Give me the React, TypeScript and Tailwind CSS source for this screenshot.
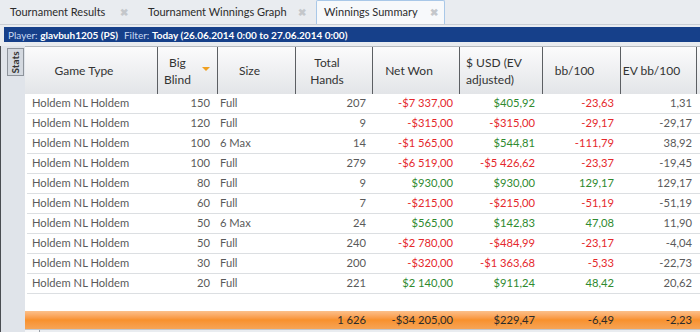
import React from 'react'

type Row = {
  game: string
  bb: number
  size: string
  hands: string
  net: string
  usd: string
  bb100: string
  ev: string
}

const rows: Row[] = [
  { game: 'Holdem NL Holdem', bb: 150, size: 'Full', hands: '207', net: '-$7 337,00', usd: '$405,92', bb100: '-23,63', ev: '1,31' },
  { game: 'Holdem NL Holdem', bb: 120, size: 'Full', hands: '9', net: '-$315,00', usd: '-$315,00', bb100: '-29,17', ev: '-29,17' },
  { game: 'Holdem NL Holdem', bb: 100, size: '6 Max', hands: '14', net: '-$1 565,00', usd: '$544,81', bb100: '-111,79', ev: '38,92' },
  { game: 'Holdem NL Holdem', bb: 100, size: 'Full', hands: '279', net: '-$6 519,00', usd: '-$5 426,62', bb100: '-23,37', ev: '-19,45' },
  { game: 'Holdem NL Holdem', bb: 80, size: 'Full', hands: '9', net: '$930,00', usd: '$930,00', bb100: '129,17', ev: '129,17' },
  { game: 'Holdem NL Holdem', bb: 60, size: 'Full', hands: '7', net: '-$215,00', usd: '-$215,00', bb100: '-51,19', ev: '-51,19' },
  { game: 'Holdem NL Holdem', bb: 50, size: '6 Max', hands: '24', net: '$565,00', usd: '$142,83', bb100: '47,08', ev: '11,90' },
  { game: 'Holdem NL Holdem', bb: 50, size: 'Full', hands: '240', net: '-$2 780,00', usd: '-$484,99', bb100: '-23,17', ev: '-4,04' },
  { game: 'Holdem NL Holdem', bb: 30, size: 'Full', hands: '200', net: '-$320,00', usd: '-$1 363,68', bb100: '-5,33', ev: '-22,73' },
  { game: 'Holdem NL Holdem', bb: 20, size: 'Full', hands: '221', net: '$2 140,00', usd: '$911,24', bb100: '48,42', ev: '20,62' },
]

// column widths, left to right
const cols = ['w-[133px]', 'w-[60px]', 'w-[78px]', 'w-[77px]', 'w-[87px]', 'w-[83px]', 'w-[78px]', 'w-[76px]']

function money(v: string) {
  return v.startsWith('-') ? 'text-[#e5282c]' : 'text-[#2f8a2f]'
}

function Tab({ label, width, active }: { label: string; width: string; active?: boolean }) {
  return (
    <div
      className={
        active
          ? `${width} flex h-[24px] items-center justify-between rounded-t-[2px] border border-b-0 border-[#a9c8e8] bg-[#f7f9fb] pl-[7px] pr-[6px]`
          : `${width} flex h-[24px] items-center justify-between pl-[10px] pr-[10px]`
      }
    >
      <span className="text-[11px] text-[#2b2b2b]">{label}</span>
      <span className="text-[10px] font-bold text-[#c4c7cb]">✖</span>
    </div>
  )
}

function HeaderCell({ i, children, sort }: { i: number; children: React.ReactNode; sort?: boolean }) {
  return (
    <div className={`${cols[i]} relative flex h-full shrink-0 items-center justify-center border-r border-[#5c5f63] pr-[14px] text-center leading-[17px]`}>
      {children}
      {sort && <span className="absolute right-[7px] top-[20px] h-0 w-0 border-x-[4px] border-t-[4px] border-x-transparent border-t-[#f0a020]" />}
    </div>
  )
}

export default function App() {
  return (
    <div className="h-[332px] w-[700px] overflow-hidden bg-[#e9ecf0] font-['Lato',sans-serif]">
      {/* tabs */}
      <div className="flex h-[25px] items-end border-b border-[#c9ced4] bg-[#e9ecf0]">
        <Tab label="Tournament Results" width="w-[138px]" />
        <Tab label="Tournament Winnings Graph" width="w-[178px]" />
        <Tab label="Winnings Summary" width="w-[129px]" active />
      </div>

      {/* filter bar */}
      <div className="ml-[4px] mt-[2px] flex h-[15px] items-center gap-[6px] bg-[#16408a] pl-[4px] text-[10px] leading-none">
        <span className="text-[#c9daf4]">
          Player: <span className="font-bold text-white">glavbuh1205 (PS)</span>
        </span>
        <span className="text-[#c9daf4]">
          Filter: <span className="font-bold text-white">Today (26.06.2014 0:00 to 27.06.2014 0:00)</span>
        </span>
      </div>

      <div className="mt-[4px] flex">
        {/* side strip */}
        <div className="flex h-[290px] w-[25px] shrink-0 border-l border-[#4a4d52] bg-[#e0e4ea] pl-[6px] pt-[2px]">
          <div className="flex h-[28px] w-[17px] items-center justify-center border border-[#8d939b] bg-[#d4d9e0]">
            <span className="-rotate-90 text-[10px] font-bold text-[#333]">Stats</span>
          </div>
        </div>

        {/* grid */}
        <div className="flex flex-1 flex-col bg-white">
          <div className="flex h-[48px] border-t border-[#b5b9be] bg-gradient-to-b from-[#fbfbfc] to-[#e3e5e8] text-[12px] text-[#333]">
            <HeaderCell i={0}>Game Type</HeaderCell>
            <HeaderCell i={1} sort>
              <span className="pr-[6px]">Big<br />Blind</span>
            </HeaderCell>
            <HeaderCell i={2}>Size</HeaderCell>
            <HeaderCell i={3}>Total<br />Hands</HeaderCell>
            <HeaderCell i={4}>Net Won</HeaderCell>
            <HeaderCell i={5}>
              <span className="text-left">$ USD (EV<br />adjusted)</span>
            </HeaderCell>
            <HeaderCell i={6}>bb/100</HeaderCell>
            <HeaderCell i={7}>EV bb/100</HeaderCell>
          </div>

          {rows.map((r, idx) => (
            <div key={idx} className="ml-[2px] flex h-[20px] items-center border-b border-[#dcdfe2] text-[11.2px] text-[#5a5a5a]">
              <div className={`${cols[0]} -ml-[2px] shrink-0 pl-[7px]`}>{r.game}</div>
              <div className={`${cols[1]} shrink-0 pr-[8px] text-right`}>{r.bb}</div>
              <div className={`${cols[2]} shrink-0 pl-[2px]`}>{r.size}</div>
              <div className={`${cols[3]} shrink-0 pr-[7px] text-right`}>{r.hands}</div>
              <div className={`${cols[4]} shrink-0 pr-[7px] text-right ${money(r.net)}`}>{r.net}</div>
              <div className={`${cols[5]} shrink-0 pr-[8px] text-right ${money(r.usd)}`}>{r.usd}</div>
              <div className={`${cols[6]} shrink-0 pr-[7px] text-right ${money(r.bb100)}`}>{r.bb100}</div>
              <div className={`${cols[7]} shrink-0 pr-[5px] text-right`}>{r.ev}</div>
            </div>
          ))}

          <div className="h-[17px]" />

          <div className="flex h-[18px] items-center bg-gradient-to-b from-[#fcc08a] via-[#f8912c] to-[#f6a455] text-[11.2px] text-[#2b2b2b]">
            <div className={`${cols[0]} shrink-0`} />
            <div className={`${cols[1]} shrink-0`} />
            <div className={`${cols[2]} shrink-0`} />
            <div className={`${cols[3]} shrink-0 pr-[7px] text-right`}>1 626</div>
            <div className={`${cols[4]} shrink-0 pr-[7px] text-right`}>-$34 205,00</div>
            <div className={`${cols[5]} shrink-0 pr-[8px] text-right`}>$229,47</div>
            <div className={`${cols[6]} shrink-0 pr-[7px] text-right`}>-6,49</div>
            <div className={`${cols[7]} shrink-0 pr-[5px] text-right`}>-2,23</div>
          </div>

          <div className="flex h-[5px] border-t border-[#c3c7cc] bg-[#e9ecf0]">
            <div className="w-[15px] border-r border-[#9aa0a7] bg-[#f4f5f7]" />
          </div>
        </div>
      </div>
    </div>
  )
}
